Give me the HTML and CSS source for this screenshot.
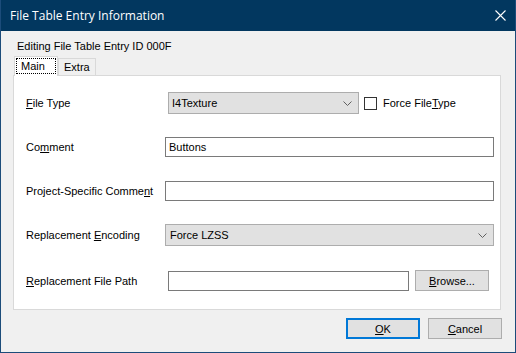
FILE: index.html
```html
<!DOCTYPE html>
<html>
<head>
    <title>File Table Entry Information</title>
    <link rel="stylesheet" href="styles.css">
</head>
<body>
    <div class="window">
        <div class="titlebar">
            <span class="title">File Table Entry Information</span>
            <svg class="close" width="11" height="11" viewBox="0 0 11 11">
                <path d="M0.5 0.5 L10.5 10.5 M10.5 0.5 L0.5 10.5" stroke="#fff" stroke-width="1.1" fill="none"/>
            </svg>
        </div>
        <div class="client">
            <div class="heading">Editing File Table Entry ID 000F</div>
            <div class="tabs">
                <div class="tab active"><span class="focus">Main</span></div>
                <div class="tab">Extra</div>
            </div>
            <div class="panel">
                <div class="row row-type">
                    <label class="label"><u>F</u>ile Type</label>
                    <div class="combo combo-short">
                        <span>I4Texture</span>
                        <svg class="chev" width="9" height="5" viewBox="0 0 9 5"><path d="M0.5 0.5 L4.5 4.5 L8.5 0.5" stroke="#606060" fill="none"/></svg>
                    </div>
                    <span class="check"></span>
                    <span class="check-label">Force File<u>T</u>ype</span>
                </div>
                <div class="row row-comment">
                    <label class="label">Co<u>m</u>ment</label>
                    <div class="textbox textbox-wide">Buttons</div>
                </div>
                <div class="row row-project">
                    <label class="label">Project-Specific Comme<u>n</u>t</label>
                    <div class="textbox textbox-wide"></div>
                </div>
                <div class="row row-encoding">
                    <label class="label">Replacement <u>E</u>ncoding</label>
                    <div class="combo combo-wide">
                        <span>Force LZSS</span>
                        <svg class="chev" width="9" height="5" viewBox="0 0 9 5"><path d="M0.5 0.5 L4.5 4.5 L8.5 0.5" stroke="#606060" fill="none"/></svg>
                    </div>
                </div>
                <div class="row row-path">
                    <label class="label"><u>R</u>eplacement File Path</label>
                    <div class="textbox textbox-path"></div>
                    <button class="btn browse"><u>B</u>rowse...</button>
                </div>
            </div>
            <div class="actions">
                <button class="btn default"><u>O</u>K</button>
                <button class="btn"><u>C</u>ancel</button>
            </div>
        </div>
    </div>
</body>
</html>
```

FILE: styles.css
```css
body {
    margin: 0;
    font-family: "Liberation Sans", Arial, sans-serif;
    font-size: 11px;
    color: #000;
    background-color: #f0f0f0;
}

u {
    text-decoration: underline;
    text-underline-offset: 1px;
}

.window {
    width: 516px;
    height: 353px;
    box-sizing: border-box;
    border: 1px solid #1c4c7a;
    border-top: none;
    background-color: #f0f0f0;
    display: flex;
    flex-direction: column;
}

.titlebar {
    height: 31px;
    background-color: #02375f;
    color: #fff;
    display: flex;
    align-items: center;
    justify-content: space-between;
    padding: 0 9px 0 9px;
    flex-shrink: 0;
}

.title {
    font-family: "Open Sans", "Noto Sans", sans-serif;
    font-size: 12px;
}

.client {
    padding: 9px 13px 0 12px;
}

.heading {
    padding-left: 4px;
    height: 13px;
    line-height: 13px;
}

.tabs {
    display: flex;
    align-items: flex-end;
    margin-top: 3px;
    padding-left: 1px;
    height: 19px;
    position: relative;
    z-index: 1;
}

.tab {
    box-sizing: border-box;
    border: 1px solid #d9d9d9;
    border-bottom: none;
    background-color: #f0f0f0;
    height: 17px;
    line-height: 16px;
    padding: 0 5px;
    width: 38px;
}

.tab.active {
    background-color: #fff;
    height: 20px;
    width: 44px;
    margin-bottom: -1px;
    padding: 1px 1px 0 1px;
}

.focus {
    display: block;
    border: 1px dotted #000;
    height: 16px;
    line-height: 15px;
    padding-left: 4px;
    box-sizing: border-box;
}

.panel {
    width: 488px;
    height: 235px;
    box-sizing: border-box;
    border: 1px solid #d9d9d9;
    background-color: #fff;
    padding: 16px 0 0 12px;
}

.row {
    display: flex;
    align-items: center;
}

.label {
    width: 139px;
    flex-shrink: 0;
}

.row-comment {
    margin-top: 23px;
}

.row-project {
    margin-top: 24px;
}

.row-encoding {
    margin-top: 23px;
}

.row-path {
    margin-top: 24px;
}

.combo {
    box-sizing: border-box;
    height: 22px;
    border: 1px solid #adadad;
    background-color: #e1e1e1;
    display: flex;
    align-items: center;
    justify-content: space-between;
    padding: 0 6px 0 3px;
}

.combo-short {
    width: 191px;
    margin-left: 3px;
}

.combo-wide {
    width: 329px;
    padding-left: 4px;
}

.chev {
    margin-top: 1px;
}

.check {
    width: 13px;
    height: 13px;
    box-sizing: border-box;
    border: 1px solid #333;
    background-color: #fff;
    margin-left: 5px;
}

.check-label {
    margin-left: 6px;
}

.textbox {
    box-sizing: border-box;
    height: 20px;
    border: 1px solid #7a7a7a;
    background-color: #fff;
    line-height: 18px;
    padding-left: 3px;
}

.textbox-wide {
    width: 329px;
}

.textbox-path {
    width: 241px;
    margin-left: 3px;
}

.btn {
    box-sizing: border-box;
    width: 74px;
    height: 21px;
    border: 1px solid #adadad;
    background-color: #e1e1e1;
    font-family: "Liberation Sans", Arial, sans-serif;
    font-size: 11px;
    color: #000;
    padding: 0;
}

.browse {
    margin-left: 6px;
}

.actions {
    display: flex;
    justify-content: flex-end;
    gap: 8px;
    margin-top: 8px;
}

.btn.default {
    border: 2px solid #0078d7;
}
```
